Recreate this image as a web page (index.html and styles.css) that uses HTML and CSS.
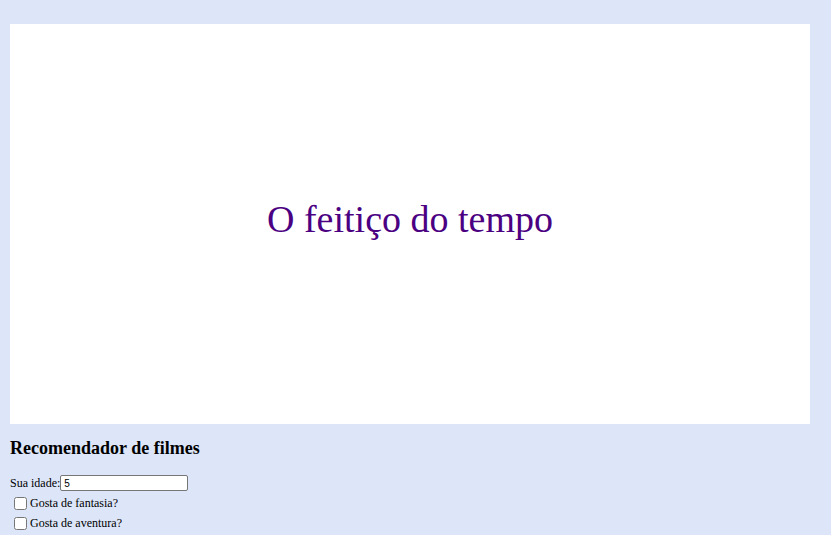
FILE: index.html
```html
<!DOCTYPE html>
<html lang="pt">
<head>
<meta charset="utf-8">
<title>Recomendador de filmes</title>
<link rel="stylesheet" href="styles.css">
</head>
<body>
<main class="stage">
  <div class="canvas"><span class="movie">O feitiço do tempo</span></div>
</main>
<h3 class="title">Recomendador de filmes</h3>
<div class="row">Sua idade:<input class="age" type="text" value="5"></div>
<div class="check"><label><input type="checkbox">Gosta de fantasia?</label></div>
<div class="check"><label><input type="checkbox">Gosta de aventura?</label></div>
</body>
</html>
```

FILE: styles.css
```css
html, body {
  margin: 0;
  background: #dce6f8;
}
body {
  padding: 24px 10px 0 10px;
  font-family: "Liberation Serif", serif;
  color: #000;
}
.stage {
  display: block;
}
.canvas {
  width: 800px;
  height: 400px;
  background: #fff;
  display: flex;
  align-items: center;
  justify-content: center;
}
.movie {
  font-family: "Liberation Serif", serif;
  font-size: 38px;
  color: #4b0082;
  padding-bottom: 10px;
}
.title {
  font-size: 18px;
  font-weight: bold;
  margin: 14px 0 15px 0;
}
.row {
  font-size: 12px;
  display: flex;
  align-items: center;
  height: 18px;
  margin-bottom: 1px;
}
.age {
  width: 128px;
  height: 16px;
  box-sizing: border-box;
  margin: 0;
  padding: 1px 3px;
  border: 1px solid #767676;
  border-radius: 2px;
  font-family: "Liberation Sans", sans-serif;
  font-size: 10px;
  background: #fff;
}
.check {
  font-size: 12px;
  height: 20px;
  display: flex;
  align-items: center;
}
.check label {
  display: flex;
  align-items: center;
}
.check input {
  width: 13px;
  height: 13px;
  margin: 3px 3px 3px 4px;
}
```
